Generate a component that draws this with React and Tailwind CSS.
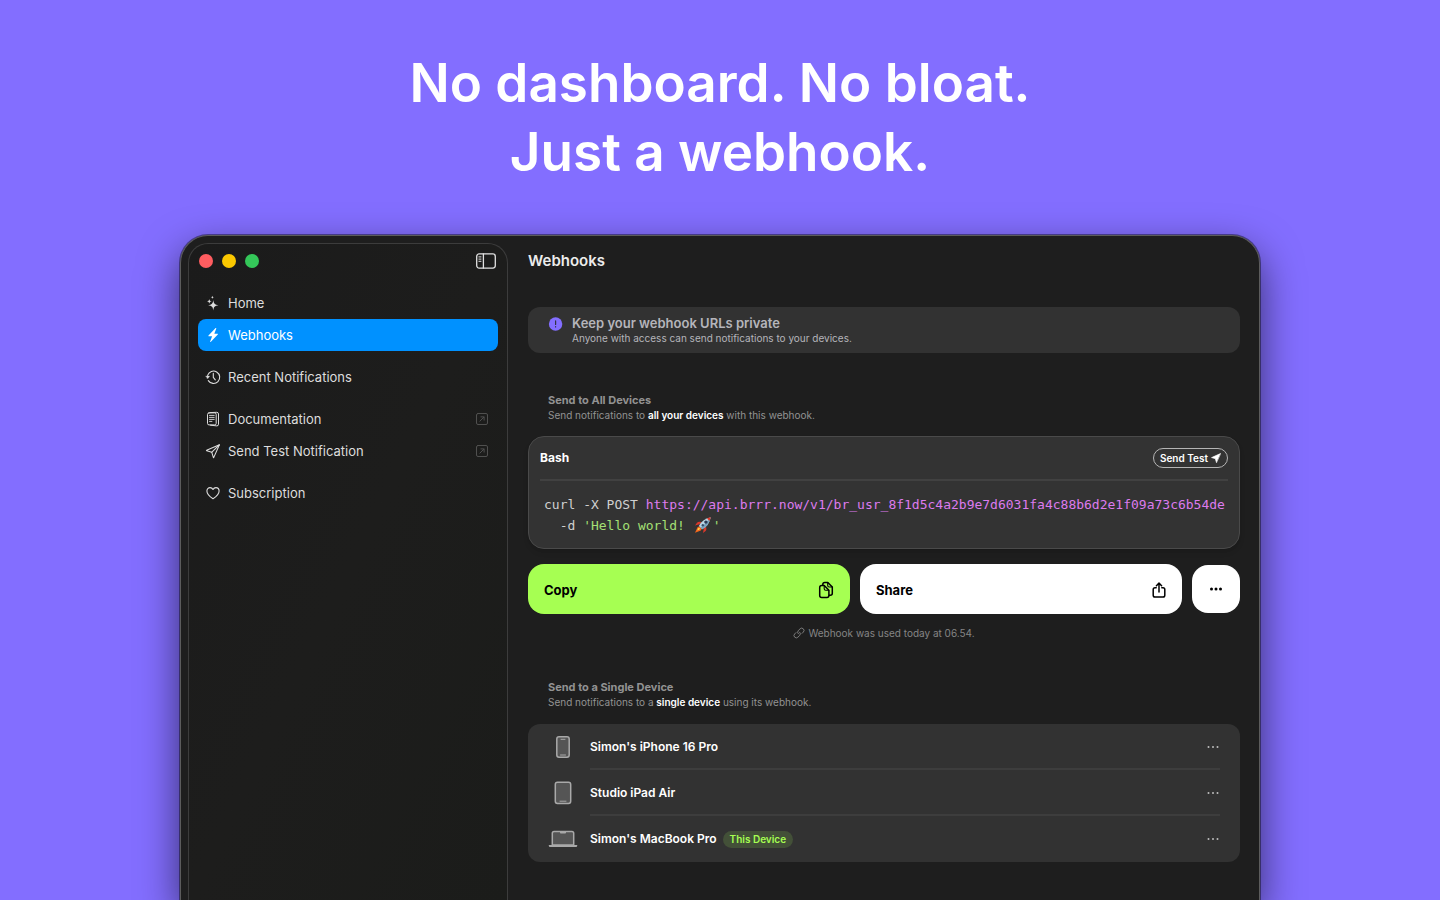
import clsx from "clsx";

const iconProps = {
  viewBox: "0 0 16 16",
  fill: "none",
  stroke: "currentColor",
  strokeLinecap: "round",
  strokeLinejoin: "round",
  "aria-hidden": true,
};

const SparklesIcon = () => (
  <svg {...iconProps} stroke="none" fill="currentColor" className="size-4 shrink-0">
    <path d="M8.3 5.1c.5 3.6 1.3 4.7 5.2 5.2-3.9.5-4.7 1.6-5.2 5.2-.5-3.6-1.3-4.7-5.2-5.2 3.9-.5 4.7-1.6 5.2-5.2Z" />
    <path d="M4.3 3.9c.3 1.6.8 2.1 2.4 2.4-1.6.3-2.1.8-2.4 2.4-.3-1.6-.8-2.1-2.4-2.4 1.6-.3 2.1-.8 2.4-2.4Z" />
    <path d="M7.4.7c.2 1 .6 1.4 1.6 1.6-1 .2-1.4.6-1.6 1.6-.2-1-.6-1.4-1.6-1.6 1-.2 1.4-.6 1.6-1.6Z" />
  </svg>
);

const BoltIcon = () => (
  <svg {...iconProps} stroke="none" fill="currentColor" className="size-4 shrink-0">
    <path d="M10.6 1.1 3.5 8.6c-.3.3-.1.7.3.7h3.3L5.2 14.4c-.2.5.3.8.7.4l6.9-7.3c.3-.3.1-.7-.3-.7H9.3l2-5.3c.2-.5-.3-.8-.7-.4Z" />
  </svg>
);

const HistoryIcon = () => (
  <svg {...iconProps} strokeWidth="1.1" className="size-4 shrink-0">
    <path d="M2.6 6.4A6.2 6.2 0 1 1 3.3 11.6" />
    <path d="M8.3 4.4v3.9l2 2.5" />
    <path d="M.9 7.1h3.8L2.7 9.7Z" fill="currentColor" strokeWidth="0.3" />
  </svg>
);

const DocIcon = () => (
  <svg {...iconProps} strokeWidth="1" className="size-4 shrink-0">
    <rect x="2.5" y="1.9" width="8.7" height="12" rx="1.5" />
    <path d="M5 1.6 11.7 1.3q1.8 0 1.8 1.7v10.2q0 1.8-1.7 1.7L5.5 14.2" />
    <path d="M4.5 4.4h4.7M4.5 6.4h4.7M4.5 8.4h4.7M4.5 10.4h2.4" strokeWidth="0.9" />
  </svg>
);

const PlaneIcon = () => (
  <svg {...iconProps} strokeWidth="1.05" className="size-4 shrink-0">
    <path d="M14.4 1.7 1.6 7.3q-.4.3.1.5l5.1 1.5 1.5 5.1q.2.5.5 0Z" />
    <path d="M14.2 1.9 6.9 9.2" />
  </svg>
);

const HeartIcon = () => (
  <svg {...iconProps} strokeWidth="1.1" className="size-4 shrink-0">
    <path d="M8 13.8C5 11.9 1.9 9.2 1.9 6.1c0-2 1.4-3.5 3.2-3.5 1.3 0 2.3.7 2.9 1.9.6-1.2 1.6-1.9 2.9-1.9 1.8 0 3.2 1.5 3.2 3.5 0 3.1-3.1 5.8-6.1 7.7Z" />
  </svg>
);

const ExternalIcon = () => (
  <svg {...iconProps} viewBox="0 0 12 12" strokeWidth="1" className="ml-auto size-3 shrink-0 text-[#50504f]">
    <rect x="0.5" y="0.5" width="11" height="11" rx="1.5" />
    <path d="M3.9 8.1 7.9 4.1M4.9 3.9h3.2v3.2" />
  </svg>
);

const SidebarIcon = () => (
  <svg {...iconProps} viewBox="0 0 20 16" strokeWidth="1.3" className="h-4 w-5">
    <rect x="0.7" y="0.9" width="18.6" height="14.2" rx="2.5" />
    <path d="M7.4 1v14" />
    <path d="M2.9 3.9h2.1M2.9 6.1h2.1M2.9 8.3h2.1" strokeWidth="1" />
  </svg>
);

const SolidPlaneIcon = () => (
  <svg {...iconProps} viewBox="0 0 10 10" strokeWidth="0.6" className="size-2.5">
    <path d="M9.4.6.5 4.6l3.8 1.1L5.4 9.4Z" fill="currentColor" />
  </svg>
);

const CopyIcon = () => (
  <svg {...iconProps} viewBox="0 0 16 18" strokeWidth="1.5" className="h-[18px] w-4">
    <path d="M4.8 4.2V3.4Q4.800 1.4 6.8 1.4H9.8L14.3 6v6.2q0 2-2 2h-1" />
    <path d="M9.7 1.6v2.9q0 1.5 1.5 1.5h3" strokeWidth="1.1" />
    <path d="M6.2 4.5H3.7q-2 0-2 2v8.1q0 2 2 2h5.2q2 0 2-2V9.2Z" />
    <path d="M6.2 4.7v3.1q0 1.5 1.5 1.5h3" strokeWidth="1.1" />
  </svg>
);

const ShareIcon = () => (
  <svg {...iconProps} viewBox="0 0 14 16" strokeWidth="1.5" className="h-4 w-3.5">
    <path d="M4.2 5.7H3q-1.8 0-1.8 1.8v5.7Q1.2 15 3 15h8q1.8 0 1.8-1.8V7.5q0-1.8-1.8-1.8H9.8" />
    <path d="M7 10V1.2M4.4 3.7 7 1.1l2.6 2.6" />
  </svg>
);

const LinkIcon = () => (
  <svg {...iconProps} viewBox="0 0 12 12" strokeWidth="0.9" className="size-3">
    <path d="M5.3 6.8A2.3 2.3 0 0 1 5.2 3.7l1.9-1.9a2.3 2.3 0 0 1 3.3 3.2L9 6.4" />
    <path d="M6.7 5.2a2.3 2.3 0 0 1 .1 3.1l-1.9 1.9A2.3 2.3 0 0 1 1.6 7L3 5.6" />
  </svg>
);

const Dots = ({ r = 1.5 }) => (
  <svg viewBox="0 0 14 4" fill="currentColor" className="h-1 w-3.5" aria-hidden="true">
    <circle cx="2.5" cy="2" r={r} />
    <circle cx="7" cy="2" r={r} />
    <circle cx="11.5" cy="2" r={r} />
  </svg>
);

const Rocket = () => (
  <svg viewBox="0 0 18 18" className="mx-px inline-block size-[18px] align-[-4px]" role="img" aria-label="rocket">
    <path d="M5.5 8.2 1 9.4 3 6.7q1-1 2.7-.9l2 .3Z" fill="#d9382b" />
    <path d="m9.8 12.5-.8 4.6 2.6-2q1-1 .7-2.7l-.3-2Z" fill="#d9382b" />
    <path d="M5.3 10.2Q3 10.8 2.7 13L1 16.7l4-1.4q2.3-.5 2.8-2.6Z" fill="#f0641c" />
    <path d="M4.9 11.7q-1.3.6-1.6 2.7 2-.2 2.8-1.6Z" fill="#ffe04a" />
    <path d="M4.9 9.9Q8 3.2 16.7 1.2q-1.7 8.7-8.5 12Z" fill="#b9d3e4" />
    <path d="M6.7 11.6Q12.2 7.4 16.7 1.2q-1.7 8.7-8.5 12Z" fill="#7ba3c0" />
    <path d="M13 2.5q1.7-.9 3.7-1.3-.3 2-1.2 3.8Z" fill="#d9382b" />
    <circle cx="11.9" cy="6.1" r="1.7" fill="#2b3a55" />
    <circle cx="8.8" cy="9.3" r="1.2" fill="#35506e" />
  </svg>
);

const PhoneIcon = () => (
  <svg viewBox="0 0 14 22" className="h-[22px] w-3.5" aria-hidden="true">
    <rect x="0.8" y="0.8" width="12.4" height="20.4" rx="2.2" fill="#555" stroke="#a9a9a9" strokeWidth="1.5" />
    <path d="M5 3.3h4M4.5 19h5" stroke="#a9a9a9" strokeWidth="1" strokeLinecap="round" />
  </svg>
);

const TabletIcon = () => (
  <svg viewBox="0 0 18 24" className="h-6 w-[18px]" aria-hidden="true">
    <rect x="1.3" y="1.2" width="15.4" height="21.2" rx="2.2" fill="#555" stroke="#a9a9a9" strokeWidth="1.5" />
    <path d="M6 20.2h6" stroke="#a9a9a9" strokeWidth="1" strokeLinecap="round" />
  </svg>
);

const LaptopIcon = () => (
  <svg viewBox="0 0 30 18" className="h-[18px] w-[30px]" aria-hidden="true">
    <path d="M4.3 15V3.3q0-1.8 1.8-1.8h17.8q1.8 0 1.8 1.8V15Z" fill="#555" stroke="#a9a9a9" strokeWidth="1.5" />
    <path d="M12 1.5h6v1.2q0 .8-.8.8h-4.4q-.8 0-.8-.8Z" fill="#a9a9a9" />
    <path d="M.8 15h28.4v.8q0 1.2-1.2 1.2H2q-1.200 0-1.200-1.200Z" fill="#a9a9a9" />
  </svg>
);

const navGroups = [
  [
    { label: "Home", icon: <SparklesIcon /> },
    { label: "Webhooks", icon: <BoltIcon />, active: true },
  ],
  [{ label: "Recent Notifications", icon: <HistoryIcon /> }],
  [
    { label: "Documentation", icon: <DocIcon />, external: true },
    { label: "Send Test Notification", icon: <PlaneIcon />, external: true },
  ],
  [{ label: "Subscription", icon: <HeartIcon /> }],
];

const devices = [
  { name: "Simon's iPhone 16 Pro", icon: <PhoneIcon /> },
  { name: "Studio iPad Air", icon: <TabletIcon /> },
  { name: "Simon's MacBook Pro", icon: <LaptopIcon />, current: true },
];

const Sidebar = () => (
  <aside className="mt-[7px] ml-[7px] w-80 shrink-0 rounded-t-[20px] border border-b-0 border-[#3c3c3c] bg-linear-to-br from-[#1b1b1b] via-[#1d1d1c] to-[#1b1c1a]">
    <div className="flex h-[34px] items-center gap-[9px] pr-[11px] pl-2.5">
      <span className="size-3.5 rounded-full bg-[#ff5d60]" />
      <span className="size-3.5 rounded-full bg-[#fbc800]" />
      <span className="size-3.5 rounded-full bg-[#34c759]" />
      <button aria-label="Toggle sidebar" className="ml-auto text-[#e2e2e2]">
        <SidebarIcon />
      </button>
    </div>
    <nav className="mx-[9px] mt-[9px] flex flex-col gap-2.5">
      {navGroups.map((group) => (
        <ul key={group[0].label}>
          {group.map((item) => (
            <li key={item.label}>
              <a
                href="#"
                className={clsx(
                  "flex h-8 items-center gap-[7px] rounded-lg pr-2.5 pl-[7px] text-[13px] leading-5",
                  item.active ? "bg-[#0091ff] text-white" : "text-[#dddddd]"
                )}
              >
                {item.icon}
                {item.label}
                {item.external && <ExternalIcon />}
              </a>
            </li>
          ))}
        </ul>
      ))}
    </nav>
  </aside>
);

const SectionHeading = ({ title, children }) => (
  <div className="px-5 text-[#929292]">
    <h3 className="text-[11px] leading-4 font-bold">{title}</h3>
    <p className="text-[10px] leading-[14px]">{children}</p>
  </div>
);

const CodeCard = () => (
  <div className="mt-3.5 h-[113px] overflow-hidden rounded-2xl border border-[#4a4a4a] bg-[#333333] shadow-md">
    <div className="mx-[11px] flex h-11 items-center justify-between border-b-2 border-[#414141]">
      <span className="text-xs font-bold text-white">Bash</span>
      <button className="flex h-5 items-center gap-[3px] rounded-full border border-[#b5b5b5] px-1.5 text-[10px] font-semibold text-white">
        Send Test <SolidPlaneIcon />
      </button>
    </div>
    <pre className="px-[15px] pt-[13px] font-['DejaVu_Sans_Mono',monospace] text-[13px] leading-[21px] text-[#d0d0d0]">
      {"curl -X POST "}
      <span className="text-[#dd7bee]">
        https://api.brrr.now/v1/br_usr_8f1d5c4a2b9e7d6031fa4c88b6d2e1f09a73c6b54de
      </span>
      {"\n  -d "}
      <span className="text-[#a5e075]">
        {"'Hello world! "}
        <Rocket />
        {"'"}
      </span>
    </pre>
  </div>
);

const DeviceRow = ({ device, last }) => (
  <li className="flex h-[46px] items-center pl-5">
    <span className="flex w-[30px] shrink-0 justify-center">{device.icon}</span>
    <div
      className={clsx(
        "mr-5 ml-3 flex h-full flex-1 items-center gap-1.5",
        !last && "border-b-2 border-[#3d3d3d] pt-0.5"
      )}
    >
      <span className="text-xs font-semibold text-white">{device.name}</span>
      {device.current && (
        <span className="rounded-full bg-[#435038] px-[7px] text-[10px] leading-[17px] font-semibold text-[#a6ff52]">
          This Device
        </span>
      )}
      <button aria-label={`More options for ${device.name}`} className="ml-auto text-[#bdbdbd]">
        <Dots r={1} />
      </button>
    </div>
  </li>
);

const Content = () => (
  <main className="min-w-0 flex-1 pr-[19px] pl-5">
    <h2 className="flex h-[50px] items-center text-[15px] leading-5 font-semibold text-[#ececec]">Webhooks</h2>

    <div className="mt-[21px] flex h-[46px] gap-2 rounded-xl bg-[#323232] px-5 pt-2">
      <svg viewBox="0 0 16 16" className="mt-px size-4" aria-hidden="true">
        <circle cx="7.600" cy="8" r="6.7" fill="#836eff" />
        <path d="M7.600 4.9v3.6M7.600 10.7v.2" stroke="#323244" strokeWidth="1.2" strokeLinecap="round" />
      </svg>
      <div className="text-[#b5b5bb]">
        <p className="text-[13px] leading-4 font-semibold">Keep your webhook URLs private</p>
        <p className="text-[10px] leading-[14px]">Anyone with access can send notifications to your devices.</p>
      </div>
    </div>

    <section className="mt-[39px]">
      <SectionHeading title="Send to All Devices">
        Send notifications to <b className="font-semibold text-white">all your devices</b> with this webhook.
      </SectionHeading>
      <CodeCard />
      <div className="mt-[15px] flex items-center gap-2.5 text-[13px] leading-5 font-bold text-black">
        <button className="flex h-[50px] flex-1 items-center justify-between rounded-2xl bg-[#a6ff52] px-4 pt-0.5">
          Copy <CopyIcon />
        </button>
        <button className="flex h-[50px] flex-1 items-center justify-between rounded-2xl bg-white px-4 pt-0.5">
          Share <ShareIcon />
        </button>
        <button aria-label="More" className="flex size-12 items-center justify-center rounded-2xl bg-white">
          <Dots />
        </button>
      </div>
      <p className="mt-3 flex items-center justify-center gap-[3px] text-[10px] leading-[14px] text-[#858585]">
        <LinkIcon /> Webhook was used today at 06.54.
      </p>
    </section>

    <section className="mt-[39px]">
      <SectionHeading title="Send to a Single Device">
        Send notifications to a <b className="font-semibold text-white">single device</b> using its webhook.
      </SectionHeading>
      <ul className="mt-[15px] rounded-xl bg-[#323232]">
        {devices.map((device, i) => (
          <DeviceRow key={device.name} device={device} last={i === devices.length - 1} />
        ))}
      </ul>
    </section>
  </main>
);

const App = () => {
  return (
    <div className="flex h-screen flex-col overflow-hidden bg-[#836eff] font-['Inter',sans-serif]">
      <h1 className="pt-[49px] text-center text-[53px] leading-[69px] font-semibold text-white">
        No dashboard. No bloat.
        <br />
        Just a webhook.
      </h1>
      <div className="mx-auto mt-12 flex w-full max-w-[1080px] flex-1 rounded-t-[28px] border border-b-0 border-[#5c5c5c] bg-[#1e1e1e] shadow-[0_16px_40px_rgba(0,0,0,0.6),0_0_0_1px_rgba(0,0,0,0.4)]">
        <Sidebar />
        <Content />
      </div>
    </div>
  );
};

export default App;
